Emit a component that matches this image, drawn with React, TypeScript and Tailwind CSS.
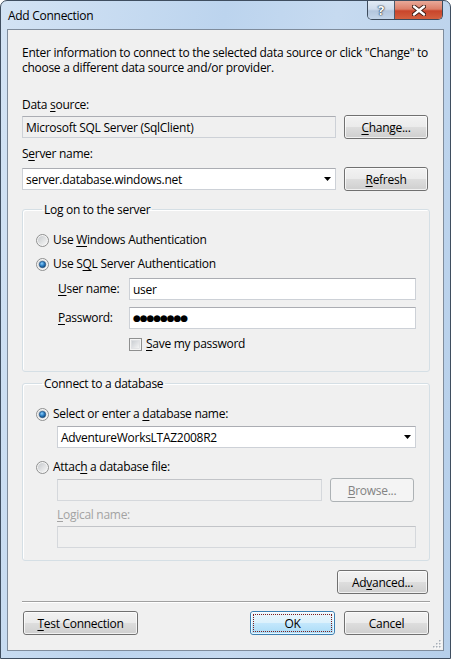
import React from "react";

const U = ({ c }: { c: string }) => (
  <span className="underline decoration-1 underline-offset-[2px]">{c}</span>
);

function Button({
  children,
  w,
  primary,
  disabled,
}: {
  children: React.ReactNode;
  w: string;
  primary?: boolean;
  disabled?: boolean;
}) {
  const look = disabled
    ? "border-[#adb2b5] bg-[#f4f4f4] text-[#838383]"
    : primary
    ? "border-[#3c7fb1] text-black bg-[linear-gradient(to_bottom,#ecf7fd_0%,#dcf1fc_48%,#c3e7fc_52%,#a9dbf6_100%)]"
    : "border-[#707070] text-black bg-[linear-gradient(to_bottom,#f2f2f2_0%,#ebebeb_48%,#dddddd_52%,#cfcfcf_100%)]";
  return (
    <button
      type="button"
      className={`relative h-[24px] shrink-0 rounded-[3px] border leading-[15px] ${look} ${w}`}
    >
      {!disabled && <span className="absolute inset-0 rounded-[2px] border border-white/70" />}
      {primary && <span className="absolute inset-[2px] border border-dotted border-[#7d1d1d]" />}
      <span className="relative">{children}</span>
    </button>
  );
}

function Radio({ on }: { on?: boolean }) {
  return (
    <svg width="13" height="13" viewBox="0 0 13 13" className="shrink-0">
      <defs>
        <linearGradient id="rin" x1="0" y1="0" x2="1" y2="1">
          <stop offset="0" stopColor="#c6c9cc" />
          <stop offset="1" stopColor="#f7f7f7" />
        </linearGradient>
        <radialGradient id="rdot" cx="0.4" cy="0.35" r="0.7">
          <stop offset="0" stopColor="#8fd0fa" />
          <stop offset="0.5" stopColor="#2c7fc6" />
          <stop offset="1" stopColor="#0f3f6e" />
        </radialGradient>
      </defs>
      <circle cx="6.5" cy="6.5" r="6" fill="#f5f5f5" stroke="#8e8f8f" />
      <circle cx="6.5" cy="6.5" r="4.6" fill="url(#rin)" />
      {on && <circle cx="6.5" cy="6.5" r="3.2" fill="url(#rdot)" stroke="#1b4a78" strokeWidth="0.6" />}
    </svg>
  );
}

function Check() {
  return (
    <svg width="13" height="13" viewBox="0 0 13 13" className="shrink-0">
      <defs>
        <linearGradient id="cin" x1="0" y1="0" x2="1" y2="1">
          <stop offset="0" stopColor="#c8ccd1" />
          <stop offset="1" stopColor="#f6f6f6" />
        </linearGradient>
      </defs>
      <rect x="0.5" y="0.5" width="12" height="12" fill="#f4f4f4" stroke="#8e8f8f" />
      <rect x="2.5" y="2.5" width="8" height="8" fill="url(#cin)" stroke="#d9dbde" strokeWidth="0.6" />
    </svg>
  );
}

function Arrow() {
  return (
    <svg width="7" height="4" viewBox="0 0 7 4" className="shrink-0">
      <polygon points="0,0 7,0 3.5,4" fill="#000" />
    </svg>
  );
}

const field =
  "flex h-[22px] items-center border border-[#cdd1d7] border-t-[#abadb3] px-[3px] leading-[15px]";

export default function App() {
  return (
    <div className="flex h-[659px] w-[451px] flex-col overflow-hidden rounded-t-[7px] border border-[#3f4e60] bg-[linear-gradient(100deg,#d3e3f4_0%,#bcd4ee_40%,#c6daf0_60%,#b6cfea_100%)] font-['Open_Sans','Noto_Sans',sans-serif] text-[12px] tracking-[-0.28px] text-black">
      {/* title bar */}
      <div className="flex h-[28px] shrink-0 items-start">
        <div className="flex h-full flex-1 items-center pl-[7px] pt-[1px] text-[12px]">Add Connection</div>
        <div className="mr-[7px] flex h-[19px] overflow-hidden rounded-b-[5px] border border-t-0 border-[#3d4b5c]">
          <div className="flex w-[27px] items-center justify-center border-r border-[#4b5a6b] bg-[linear-gradient(to_bottom,#e2ebf5_0%,#cfdcec_45%,#b3c6dd_55%,#c3d5e9_100%)] text-[13px] font-bold leading-none text-white [text-shadow:0_0_1px_#2b3a4c,0_0_1px_#2b3a4c,0_0_2px_#2b3a4c]">
            ?
          </div>
          <div className="flex w-[47px] items-center justify-center bg-[linear-gradient(to_bottom,#e9a999_0%,#dc7f69_45%,#c9452b_55%,#d4603f_100%)]">
            <svg width="14" height="11" viewBox="0 0 14 11">
              <path d="M2 1.5 L12 9.5 M12 1.5 L2 9.5" stroke="#3b1a12" strokeWidth="4.2" strokeLinecap="round" />
              <path d="M2 1.5 L12 9.5 M12 1.5 L2 9.5" stroke="#ffffff" strokeWidth="2.4" strokeLinecap="round" />
            </svg>
          </div>
        </div>
      </div>

      {/* client area */}
      <div className="relative mx-[6px] flex h-[622px] shrink-0 flex-col border border-[#7f8c9c] bg-[#f0f0f0] pl-[14px] pr-[13px]">
        <div className="mt-[15px] leading-[15px]">
          Enter information to connect to the selected data source or click "Change" to choose a different data source and/or provider.
        </div>

        <div className="mt-[22px] leading-[15px]">
          Data <U c="s" />ource:
        </div>
        <div className="mt-[3px] flex h-[24px] items-center">
          <div className={`${field} w-[314px] bg-[#f0f0f0]`}>Microsoft SQL Server (SqlClient)</div>
          <div className="ml-[8px]">
            <Button w="w-[84px]">
              <U c="C" />hange...
            </Button>
          </div>
        </div>

        <div className="mt-[7px] leading-[15px]">
          S<U c="e" />rver name:
        </div>
        <div className="mt-[6px] flex h-[24px] items-center">
          <div className={`${field} w-[314px] justify-between bg-white pr-[4px]`}>
            <span>server.database.windows.net</span>
            <Arrow />
          </div>
          <div className="ml-[8px]">
            <Button w="w-[84px]">
              <U c="R" />efresh
            </Button>
          </div>
        </div>

        {/* Log on group */}
        <fieldset className="mt-[11px] w-[408px] rounded-[3px] border border-[#d5dfe5] pb-[19px] pl-[13px] pr-[13px] shadow-[inset_1px_1px_0_#ffffff]">
          <legend className="ml-[6px] px-[2px] leading-[15px]">Log on to the server</legend>
          <div className="mt-[15px] flex h-[16px] items-center gap-[4px]">
            <Radio />
            <span>
              Use <U c="W" />indows Authentication
            </span>
          </div>
          <div className="mt-[8px] flex h-[16px] items-center gap-[4px]">
            <Radio on />
            <span>
              Use S<U c="Q" />L Server Authentication
            </span>
          </div>
          <div className="mt-[6px] flex h-[22px] items-center pl-[22px]">
            <span className="w-[71px]">
              <U c="U" />ser name:
            </span>
            <div className={`${field} flex-1 bg-white`}>user</div>
          </div>
          <div className="mt-[7px] flex h-[22px] items-center pl-[22px]">
            <span className="w-[71px]">
              <U c="P" />assword:
            </span>
            <div className={`${field} flex-1 bg-white font-['DejaVu_Sans',sans-serif] text-[9px] tracking-[-1.1px]`}>
              ●●●●●●●●
            </div>
          </div>
          <div className="mt-[7px] flex h-[16px] items-center gap-[4px] pl-[93px]">
            <Check />
            <span>
              <U c="S" />ave my password
            </span>
          </div>
        </fieldset>

        {/* Connect group */}
        <fieldset className="mt-[4px] w-[408px] rounded-[3px] border border-[#d5dfe5] pb-[12px] pl-[13px] pr-[13px] shadow-[inset_1px_1px_0_#ffffff]">
          <legend className="ml-[6px] px-[2px] leading-[15px]">Connect to a database</legend>
          <div className="mt-[15px] flex h-[16px] items-center gap-[4px]">
            <Radio on />
            <span>
              Select or enter a <U c="d" />atabase name:
            </span>
          </div>
          <div className="mt-[4px] pl-[21px]">
            <div className={`${field} justify-between bg-white pr-[4px]`}>
              <span>AdventureWorksLTAZ2008R2</span>
              <Arrow />
            </div>
          </div>
          <div className="mt-[11px] flex h-[16px] items-center gap-[4px]">
            <Radio />
            <span>
              Attac<U c="h" /> a database file:
            </span>
          </div>
          <div className="mt-[3px] flex h-[24px] items-center pl-[21px]">
            <div className={`${field} w-[265px] border-[#d5d8dc] border-t-[#c2c4c8] bg-[#f0f0f0]`} />
            <div className="ml-[8px]">
              <Button w="w-[84px]" disabled>
                <U c="B" />rowse...
              </Button>
            </div>
          </div>
          <div className="mt-[5px] pl-[21px] leading-[15px] text-[#a3a3a3]">
            <U c="L" />ogical name:
          </div>
          <div className="mt-[4px] pl-[21px]">
            <div className={`${field} border-[#d5d8dc] border-t-[#c2c4c8] bg-[#f0f0f0]`} />
          </div>
        </fieldset>

        <div className="mt-[9px] flex w-[407px] justify-end pr-[1px]">
          <Button w="w-[91px]">
            Ad<U c="v" />anced...
          </Button>
        </div>

        <div className="mt-[7px] h-px w-[408px] bg-[#a0a0a0] shadow-[0_1px_0_#ffffff]" />

        <div className="mt-[9px] flex w-[407px] items-center pl-[1px]">
          <Button w="w-[115px]">
            <U c="T" />est Connection
          </Button>
          <div className="ml-auto flex gap-[9px]">
            <Button w="w-[85px]" primary>
              OK
            </Button>
            <Button w="w-[85px]">Cancel</Button>
          </div>
        </div>

        {/* size grip */}
        <svg width="10" height="10" viewBox="0 0 10 10" className="absolute bottom-[1px] right-[1px]">
          {[
            [8, 2],
            [5, 5],
            [8, 5],
            [2, 8],
            [5, 8],
            [8, 8],
          ].map(([x, y], i) => (
            <g key={i}>
              <rect x={x} y={y} width="1.5" height="1.5" fill="#ffffff" />
              <rect x={x - 1} y={y - 1} width="1.5" height="1.5" fill="#a6aeb8" />
            </g>
          ))}
        </svg>
      </div>
    </div>
  );
}
